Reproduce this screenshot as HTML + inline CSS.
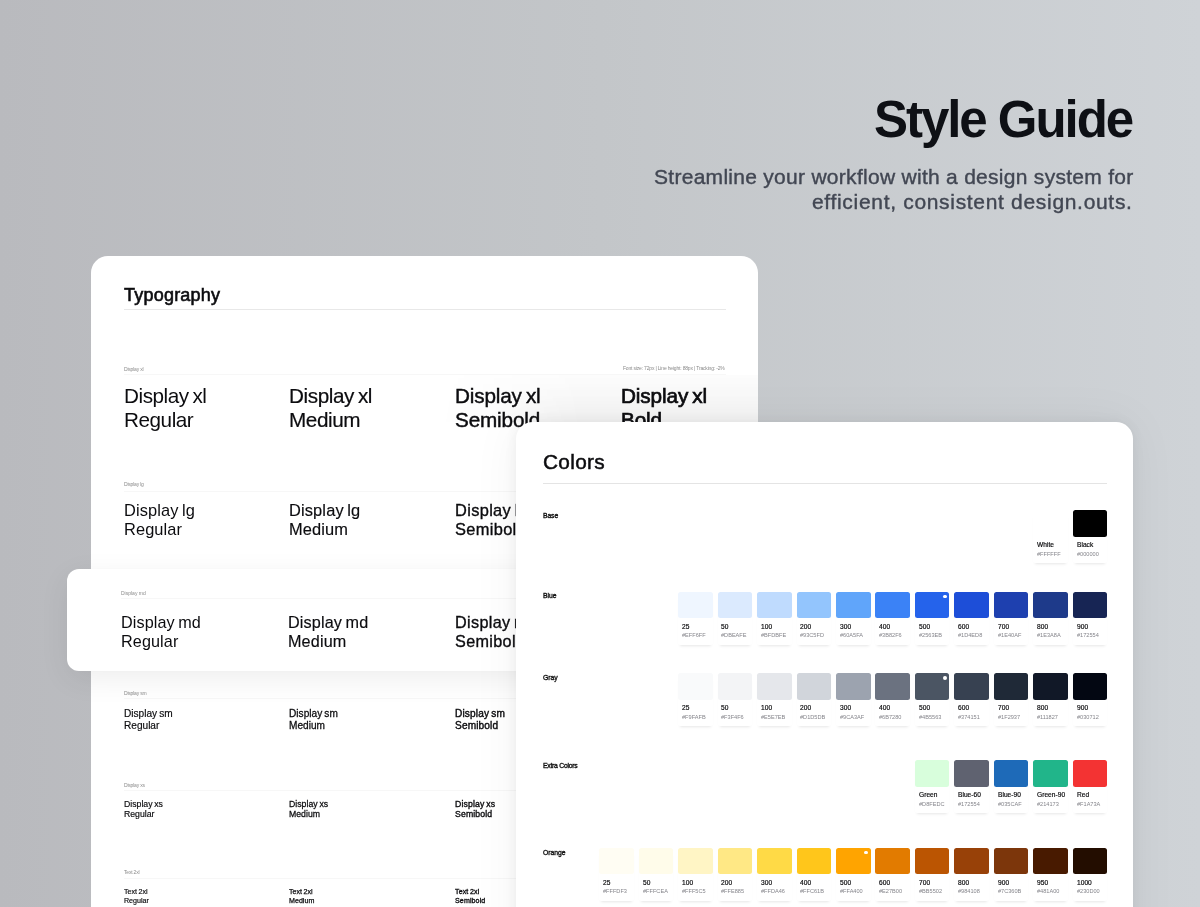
<!DOCTYPE html>
<html><head><meta charset="utf-8"><title>Style Guide</title>
<style>
html,body{margin:0;padding:0;width:1200px;height:907px;overflow:hidden;background:#c3c6c9;}
#root{position:relative;width:1200px;height:907px;overflow:hidden;background:linear-gradient(90deg,#b9babe 0%,#c3c6c9 50%,#cfd3d7 100%);font-family:"Liberation Sans",sans-serif;}
.t{position:absolute;white-space:nowrap;will-change:transform;}
.card{position:absolute;background:#fff;border-radius:17px;overflow:hidden;}
#typo{left:90.5px;top:256px;width:667.5px;height:700px;}
#colors{left:516px;top:422px;width:616.9px;height:600px;box-shadow:0 0 16px rgba(0,0,0,0.07),0 0 50px rgba(0,0,0,0.05);}
.card2{position:absolute;background:#fff;border-radius:12px;overflow:hidden;}
#hl{left:66.5px;top:568.5px;width:700px;height:102px;box-shadow:0 8px 30px rgba(0,0,0,0.07),0 0 4px rgba(0,0,0,0.02);}
.ln{position:absolute;height:1px;background:#f7f7f7;}
.ln2{position:absolute;height:1px;background:#e4e4e4;}
.sw{position:absolute;width:34.5px;height:26.5px;border-radius:2.5px;}
.sw i{position:absolute;right:2.9px;top:3.2px;width:3.8px;height:3.8px;border-radius:50%;background:#fff;}
.sc{position:absolute;width:34.5px;height:53px;background:#fff;box-shadow:0 3px 3px -2px rgba(0,0,0,0.10);border-radius:2.5px;}
</style></head><body><div id="root">
<div class="t" style="right:67.50px;top:93.93px;font-size:51.00px;line-height:51.00px;font-weight:700;color:#0e1015;letter-spacing:-2.04px;text-align:right;">Style Guide</div><div class="t" style="right:66.90px;top:165.92px;font-size:21.00px;line-height:21.00px;font-weight:400;color:#424753;letter-spacing:0.283px;text-align:right;-webkit-text-stroke:0.4px #424753;">Streamline your workflow with a design system for</div><div class="t" style="right:67.40px;top:191.42px;font-size:21.00px;line-height:21.00px;font-weight:400;color:#424753;letter-spacing:0.685px;text-align:right;-webkit-text-stroke:0.4px #424753;">efficient, consistent design.outs.</div><div id="typo" class="card"><div style="position:absolute;left:349.5px;top:118.5px;width:318px;height:47.5px;background:linear-gradient(to bottom,rgba(0,0,0,0.012),rgba(0,0,0,0.045));-webkit-mask-image:linear-gradient(to right,transparent,#000 45%)"></div><div class="t" style="left:33.00px;top:30.16px;font-size:18.00px;line-height:18.00px;font-weight:400;color:#0c0c0f;letter-spacing:0.22px;-webkit-text-stroke:0.6px #0c0c0f;">Typography</div><div class="ln" style="left:33.0px;top:53px;width:602px;background:#e8e8e8"></div><div class="t" style="left:33.00px;top:110.87px;font-size:5.00px;line-height:5.00px;font-weight:400;color:#8a8a8a;letter-spacing:-0.2px;">Display xl</div><div class="ln" style="left:33.0px;top:118px;width:602px"></div><div class="t" style="left:33.00px;top:129.98px;font-size:20.70px;line-height:20.70px;font-weight:400;color:#0c0c0f;letter-spacing:-0.45px;word-spacing:-1.50px;">Display xl</div><div class="t" style="left:33.00px;top:153.98px;font-size:20.70px;line-height:20.70px;font-weight:400;color:#0c0c0f;letter-spacing:-0.45px;word-spacing:-1.50px;">Regular</div><div class="t" style="left:198.50px;top:129.98px;font-size:20.70px;line-height:20.70px;font-weight:400;color:#0c0c0f;letter-spacing:-0.4px;word-spacing:-1.50px;-webkit-text-stroke:0.20px #0c0c0f;">Display xl</div><div class="t" style="left:198.50px;top:153.98px;font-size:20.70px;line-height:20.70px;font-weight:400;color:#0c0c0f;letter-spacing:-0.4px;word-spacing:-1.50px;-webkit-text-stroke:0.20px #0c0c0f;">Medium</div><div class="t" style="left:364.50px;top:129.98px;font-size:20.70px;line-height:20.70px;font-weight:400;color:#0c0c0f;letter-spacing:-0.15px;word-spacing:-1.50px;-webkit-text-stroke:0.45px #0c0c0f;">Display xl</div><div class="t" style="left:364.50px;top:153.98px;font-size:20.70px;line-height:20.70px;font-weight:400;color:#0c0c0f;letter-spacing:-0.15px;word-spacing:-1.50px;-webkit-text-stroke:0.45px #0c0c0f;">Semibold</div><div class="t" style="left:530.00px;top:129.98px;font-size:20.70px;line-height:20.70px;font-weight:400;color:#0c0c0f;letter-spacing:-0.1px;word-spacing:-1.50px;-webkit-text-stroke:0.70px #0c0c0f;">Display xl</div><div class="t" style="left:530.00px;top:153.98px;font-size:20.70px;line-height:20.70px;font-weight:400;color:#0c0c0f;letter-spacing:-0.1px;word-spacing:-1.50px;-webkit-text-stroke:0.70px #0c0c0f;">Bold</div><div class="t" style="left:33.00px;top:226.37px;font-size:5.00px;line-height:5.00px;font-weight:400;color:#8a8a8a;letter-spacing:-0.2px;">Display lg</div><div class="ln" style="left:33.0px;top:235px;width:602px"></div><div class="t" style="left:33.00px;top:245.92px;font-size:16.40px;line-height:16.40px;font-weight:400;color:#0c0c0f;letter-spacing:0.1px;word-spacing:-1.19px;">Display lg</div><div class="t" style="left:33.00px;top:265.42px;font-size:16.40px;line-height:16.40px;font-weight:400;color:#0c0c0f;letter-spacing:0.1px;word-spacing:-1.19px;">Regular</div><div class="t" style="left:198.50px;top:245.92px;font-size:16.40px;line-height:16.40px;font-weight:400;color:#0c0c0f;letter-spacing:0.14px;word-spacing:-1.19px;-webkit-text-stroke:0.16px #0c0c0f;">Display lg</div><div class="t" style="left:198.50px;top:265.42px;font-size:16.40px;line-height:16.40px;font-weight:400;color:#0c0c0f;letter-spacing:0.14px;word-spacing:-1.19px;-webkit-text-stroke:0.16px #0c0c0f;">Medium</div><div class="t" style="left:364.50px;top:245.92px;font-size:16.40px;line-height:16.40px;font-weight:400;color:#0c0c0f;letter-spacing:0.338px;word-spacing:-1.19px;-webkit-text-stroke:0.36px #0c0c0f;">Display lg</div><div class="t" style="left:364.50px;top:265.42px;font-size:16.40px;line-height:16.40px;font-weight:400;color:#0c0c0f;letter-spacing:0.338px;word-spacing:-1.19px;-webkit-text-stroke:0.36px #0c0c0f;">Semibold</div><div class="t" style="left:530.00px;top:245.92px;font-size:16.40px;line-height:16.40px;font-weight:400;color:#0c0c0f;letter-spacing:0.377px;word-spacing:-1.19px;-webkit-text-stroke:0.55px #0c0c0f;">Display lg</div><div class="t" style="left:530.00px;top:265.42px;font-size:16.40px;line-height:16.40px;font-weight:400;color:#0c0c0f;letter-spacing:0.377px;word-spacing:-1.19px;-webkit-text-stroke:0.55px #0c0c0f;">Bold</div><div class="t" style="left:33.00px;top:434.67px;font-size:5.00px;line-height:5.00px;font-weight:400;color:#8a8a8a;letter-spacing:-0.2px;">Display sm</div><div class="ln" style="left:33.0px;top:442px;width:602px"></div><div class="t" style="left:33.00px;top:453.25px;font-size:10.10px;line-height:10.10px;font-weight:400;color:#0c0c0f;letter-spacing:0.0px;word-spacing:-0.73px;-webkit-text-stroke:0.18px #0c0c0f;">Display sm</div><div class="t" style="left:33.00px;top:465.25px;font-size:10.10px;line-height:10.10px;font-weight:400;color:#0c0c0f;letter-spacing:0.0px;word-spacing:-0.73px;-webkit-text-stroke:0.18px #0c0c0f;">Regular</div><div class="t" style="left:198.50px;top:453.25px;font-size:10.10px;line-height:10.10px;font-weight:400;color:#0c0c0f;letter-spacing:0.024px;word-spacing:-0.73px;-webkit-text-stroke:0.28px #0c0c0f;">Display sm</div><div class="t" style="left:198.50px;top:465.25px;font-size:10.10px;line-height:10.10px;font-weight:400;color:#0c0c0f;letter-spacing:0.024px;word-spacing:-0.73px;-webkit-text-stroke:0.28px #0c0c0f;">Medium</div><div class="t" style="left:364.50px;top:453.25px;font-size:10.10px;line-height:10.10px;font-weight:400;color:#0c0c0f;letter-spacing:0.146px;word-spacing:-0.73px;-webkit-text-stroke:0.40px #0c0c0f;">Display sm</div><div class="t" style="left:364.50px;top:465.25px;font-size:10.10px;line-height:10.10px;font-weight:400;color:#0c0c0f;letter-spacing:0.146px;word-spacing:-0.73px;-webkit-text-stroke:0.40px #0c0c0f;">Semibold</div><div class="t" style="left:33.00px;top:526.57px;font-size:5.00px;line-height:5.00px;font-weight:400;color:#8a8a8a;letter-spacing:-0.2px;">Display xs</div><div class="ln" style="left:33.0px;top:533.5px;width:602px"></div><div class="t" style="left:33.00px;top:544.14px;font-size:8.70px;line-height:8.70px;font-weight:400;color:#0c0c0f;letter-spacing:0.0px;word-spacing:-0.63px;-webkit-text-stroke:0.18px #0c0c0f;">Display xs</div><div class="t" style="left:33.00px;top:553.94px;font-size:8.70px;line-height:8.70px;font-weight:400;color:#0c0c0f;letter-spacing:0.0px;word-spacing:-0.63px;-webkit-text-stroke:0.18px #0c0c0f;">Regular</div><div class="t" style="left:198.50px;top:544.14px;font-size:8.70px;line-height:8.70px;font-weight:400;color:#0c0c0f;letter-spacing:0.021px;word-spacing:-0.63px;-webkit-text-stroke:0.26px #0c0c0f;">Display xs</div><div class="t" style="left:198.50px;top:553.94px;font-size:8.70px;line-height:8.70px;font-weight:400;color:#0c0c0f;letter-spacing:0.021px;word-spacing:-0.63px;-webkit-text-stroke:0.26px #0c0c0f;">Medium</div><div class="t" style="left:364.50px;top:544.14px;font-size:8.70px;line-height:8.70px;font-weight:400;color:#0c0c0f;letter-spacing:0.126px;word-spacing:-0.63px;-webkit-text-stroke:0.37px #0c0c0f;">Display xs</div><div class="t" style="left:364.50px;top:553.94px;font-size:8.70px;line-height:8.70px;font-weight:400;color:#0c0c0f;letter-spacing:0.126px;word-spacing:-0.63px;-webkit-text-stroke:0.37px #0c0c0f;">Semibold</div><div class="t" style="left:33.00px;top:613.87px;font-size:5.00px;line-height:5.00px;font-weight:400;color:#8a8a8a;letter-spacing:-0.2px;">Text 2xl</div><div class="ln" style="left:33.0px;top:621.8px;width:602px"></div><div class="t" style="left:33.00px;top:632.79px;font-size:7.10px;line-height:7.10px;font-weight:400;color:#0c0c0f;letter-spacing:0.0px;word-spacing:-0.51px;-webkit-text-stroke:0.18px #0c0c0f;">Text 2xl</div><div class="t" style="left:33.00px;top:642.09px;font-size:7.10px;line-height:7.10px;font-weight:400;color:#0c0c0f;letter-spacing:0.0px;word-spacing:-0.51px;-webkit-text-stroke:0.18px #0c0c0f;">Regular</div><div class="t" style="left:198.50px;top:632.79px;font-size:7.10px;line-height:7.10px;font-weight:400;color:#0c0c0f;letter-spacing:0.017px;word-spacing:-0.51px;-webkit-text-stroke:0.25px #0c0c0f;">Text 2xl</div><div class="t" style="left:198.50px;top:642.09px;font-size:7.10px;line-height:7.10px;font-weight:400;color:#0c0c0f;letter-spacing:0.017px;word-spacing:-0.51px;-webkit-text-stroke:0.25px #0c0c0f;">Medium</div><div class="t" style="left:364.50px;top:632.79px;font-size:7.10px;line-height:7.10px;font-weight:400;color:#0c0c0f;letter-spacing:0.103px;word-spacing:-0.51px;-webkit-text-stroke:0.33px #0c0c0f;">Text 2xl</div><div class="t" style="left:364.50px;top:642.09px;font-size:7.10px;line-height:7.10px;font-weight:400;color:#0c0c0f;letter-spacing:0.103px;word-spacing:-0.51px;-webkit-text-stroke:0.33px #0c0c0f;">Semibold</div><div class="t" style="right:33.50px;top:110.37px;font-size:5.00px;line-height:5.00px;font-weight:400;color:#8a8a8a;letter-spacing:-0.18px;text-align:right;">Font size: 72px | Line height: 88px | Tracking: -2%</div></div><div id="hl" class="card2"><div class="t" style="left:54.00px;top:22.17px;font-size:5.00px;line-height:5.00px;font-weight:400;color:#8a8a8a;letter-spacing:0px;">Display md</div><div class="ln" style="left:54.0px;top:29.899999999999977px;width:620px"></div><div class="t" style="left:54.00px;top:45.79px;font-size:16.20px;line-height:16.20px;font-weight:400;color:#0c0c0f;letter-spacing:0.1px;word-spacing:-1.17px;">Display md</div><div class="t" style="left:54.00px;top:64.49px;font-size:16.20px;line-height:16.20px;font-weight:400;color:#0c0c0f;letter-spacing:0.1px;word-spacing:-1.17px;">Regular</div><div class="t" style="left:221.30px;top:45.79px;font-size:16.20px;line-height:16.20px;font-weight:400;color:#0c0c0f;letter-spacing:0.139px;word-spacing:-1.17px;-webkit-text-stroke:0.16px #0c0c0f;">Display md</div><div class="t" style="left:221.30px;top:64.49px;font-size:16.20px;line-height:16.20px;font-weight:400;color:#0c0c0f;letter-spacing:0.139px;word-spacing:-1.17px;-webkit-text-stroke:0.16px #0c0c0f;">Medium</div><div class="t" style="left:388.80px;top:45.79px;font-size:16.20px;line-height:16.20px;font-weight:400;color:#0c0c0f;letter-spacing:0.335px;word-spacing:-1.17px;-webkit-text-stroke:0.35px #0c0c0f;">Display md</div><div class="t" style="left:388.80px;top:64.49px;font-size:16.20px;line-height:16.20px;font-weight:400;color:#0c0c0f;letter-spacing:0.335px;word-spacing:-1.17px;-webkit-text-stroke:0.35px #0c0c0f;">Semibold</div><div class="t" style="left:556.30px;top:45.79px;font-size:16.20px;line-height:16.20px;font-weight:400;color:#0c0c0f;letter-spacing:0.374px;word-spacing:-1.17px;-webkit-text-stroke:0.55px #0c0c0f;">Display md</div><div class="t" style="left:556.30px;top:64.49px;font-size:16.20px;line-height:16.20px;font-weight:400;color:#0c0c0f;letter-spacing:0.374px;word-spacing:-1.17px;-webkit-text-stroke:0.55px #0c0c0f;">Bold</div></div><div id="colors" class="card"><div class="t" style="left:27.00px;top:30.19px;font-size:20.80px;line-height:20.80px;font-weight:400;color:#0c0c0f;letter-spacing:0.32px;-webkit-text-stroke:0.5px #0c0c0f;">Colors</div><div class="ln2" style="left:27px;top:61px;width:564px"></div><div class="t" style="left:27.00px;top:90.64px;font-size:6.80px;line-height:6.80px;font-weight:400;color:#111;letter-spacing:-0.09999999999999998px;-webkit-text-stroke:0.35px #111;">Base</div><div class="sc" style="left:517.25px;top:88.00px"></div><div class="sw" style="left:517.25px;top:88.00px;background:#ffffff"></div><div class="t" style="left:521.05px;top:120.11px;font-size:6.60px;line-height:6.60px;font-weight:400;color:#0a0a0c;letter-spacing:0.03px;-webkit-text-stroke:0.18px #0a0a0c;">White</div><div class="t" style="left:521.05px;top:129.86px;font-size:5.60px;line-height:5.60px;font-weight:400;color:#85858b;letter-spacing:0px;">#FFFFFF</div><div class="sc" style="left:556.70px;top:88.00px"></div><div class="sw" style="left:556.70px;top:88.00px;background:#000000"></div><div class="t" style="left:560.50px;top:120.11px;font-size:6.60px;line-height:6.60px;font-weight:400;color:#0a0a0c;letter-spacing:0.03px;-webkit-text-stroke:0.18px #0a0a0c;">Black</div><div class="t" style="left:560.50px;top:129.86px;font-size:5.60px;line-height:5.60px;font-weight:400;color:#85858b;letter-spacing:0px;">#000000</div><div class="t" style="left:27.00px;top:171.34px;font-size:6.80px;line-height:6.80px;font-weight:400;color:#111;letter-spacing:0.0px;-webkit-text-stroke:0.35px #111;">Blue</div><div class="sc" style="left:162.20px;top:169.50px"></div><div class="sw" style="left:162.20px;top:169.50px;background:#EFF6FF"></div><div class="t" style="left:166.00px;top:201.61px;font-size:6.60px;line-height:6.60px;font-weight:400;color:#0a0a0c;letter-spacing:0.03px;-webkit-text-stroke:0.18px #0a0a0c;">25</div><div class="t" style="left:166.00px;top:211.36px;font-size:5.60px;line-height:5.60px;font-weight:400;color:#85858b;letter-spacing:0px;">#EFF6FF</div><div class="sc" style="left:201.65px;top:169.50px"></div><div class="sw" style="left:201.65px;top:169.50px;background:#DBEAFE"></div><div class="t" style="left:205.45px;top:201.61px;font-size:6.60px;line-height:6.60px;font-weight:400;color:#0a0a0c;letter-spacing:0.03px;-webkit-text-stroke:0.18px #0a0a0c;">50</div><div class="t" style="left:205.45px;top:211.36px;font-size:5.60px;line-height:5.60px;font-weight:400;color:#85858b;letter-spacing:0px;">#DBEAFE</div><div class="sc" style="left:241.10px;top:169.50px"></div><div class="sw" style="left:241.10px;top:169.50px;background:#BFDBFE"></div><div class="t" style="left:244.90px;top:201.61px;font-size:6.60px;line-height:6.60px;font-weight:400;color:#0a0a0c;letter-spacing:0.03px;-webkit-text-stroke:0.18px #0a0a0c;">100</div><div class="t" style="left:244.90px;top:211.36px;font-size:5.60px;line-height:5.60px;font-weight:400;color:#85858b;letter-spacing:0px;">#BFDBFE</div><div class="sc" style="left:280.55px;top:169.50px"></div><div class="sw" style="left:280.55px;top:169.50px;background:#93C5FD"></div><div class="t" style="left:284.35px;top:201.61px;font-size:6.60px;line-height:6.60px;font-weight:400;color:#0a0a0c;letter-spacing:0.03px;-webkit-text-stroke:0.18px #0a0a0c;">200</div><div class="t" style="left:284.35px;top:211.36px;font-size:5.60px;line-height:5.60px;font-weight:400;color:#85858b;letter-spacing:0px;">#93C5FD</div><div class="sc" style="left:320.00px;top:169.50px"></div><div class="sw" style="left:320.00px;top:169.50px;background:#60A5FA"></div><div class="t" style="left:323.80px;top:201.61px;font-size:6.60px;line-height:6.60px;font-weight:400;color:#0a0a0c;letter-spacing:0.03px;-webkit-text-stroke:0.18px #0a0a0c;">300</div><div class="t" style="left:323.80px;top:211.36px;font-size:5.60px;line-height:5.60px;font-weight:400;color:#85858b;letter-spacing:0px;">#60A5FA</div><div class="sc" style="left:359.45px;top:169.50px"></div><div class="sw" style="left:359.45px;top:169.50px;background:#3B82F6"></div><div class="t" style="left:363.25px;top:201.61px;font-size:6.60px;line-height:6.60px;font-weight:400;color:#0a0a0c;letter-spacing:0.03px;-webkit-text-stroke:0.18px #0a0a0c;">400</div><div class="t" style="left:363.25px;top:211.36px;font-size:5.60px;line-height:5.60px;font-weight:400;color:#85858b;letter-spacing:0px;">#3B82F6</div><div class="sc" style="left:398.90px;top:169.50px"></div><div class="sw" style="left:398.90px;top:169.50px;background:#2563EB"><i></i></div><div class="t" style="left:402.70px;top:201.61px;font-size:6.60px;line-height:6.60px;font-weight:400;color:#0a0a0c;letter-spacing:0.03px;-webkit-text-stroke:0.18px #0a0a0c;">500</div><div class="t" style="left:402.70px;top:211.36px;font-size:5.60px;line-height:5.60px;font-weight:400;color:#85858b;letter-spacing:0px;">#2563EB</div><div class="sc" style="left:438.35px;top:169.50px"></div><div class="sw" style="left:438.35px;top:169.50px;background:#1D4ED8"></div><div class="t" style="left:442.15px;top:201.61px;font-size:6.60px;line-height:6.60px;font-weight:400;color:#0a0a0c;letter-spacing:0.03px;-webkit-text-stroke:0.18px #0a0a0c;">600</div><div class="t" style="left:442.15px;top:211.36px;font-size:5.60px;line-height:5.60px;font-weight:400;color:#85858b;letter-spacing:0px;">#1D4ED8</div><div class="sc" style="left:477.80px;top:169.50px"></div><div class="sw" style="left:477.80px;top:169.50px;background:#1E40AF"></div><div class="t" style="left:481.60px;top:201.61px;font-size:6.60px;line-height:6.60px;font-weight:400;color:#0a0a0c;letter-spacing:0.03px;-webkit-text-stroke:0.18px #0a0a0c;">700</div><div class="t" style="left:481.60px;top:211.36px;font-size:5.60px;line-height:5.60px;font-weight:400;color:#85858b;letter-spacing:0px;">#1E40AF</div><div class="sc" style="left:517.25px;top:169.50px"></div><div class="sw" style="left:517.25px;top:169.50px;background:#1E3A8A"></div><div class="t" style="left:521.05px;top:201.61px;font-size:6.60px;line-height:6.60px;font-weight:400;color:#0a0a0c;letter-spacing:0.03px;-webkit-text-stroke:0.18px #0a0a0c;">800</div><div class="t" style="left:521.05px;top:211.36px;font-size:5.60px;line-height:5.60px;font-weight:400;color:#85858b;letter-spacing:0px;">#1E3A8A</div><div class="sc" style="left:556.70px;top:169.50px"></div><div class="sw" style="left:556.70px;top:169.50px;background:#172554"></div><div class="t" style="left:560.50px;top:201.61px;font-size:6.60px;line-height:6.60px;font-weight:400;color:#0a0a0c;letter-spacing:0.03px;-webkit-text-stroke:0.18px #0a0a0c;">900</div><div class="t" style="left:560.50px;top:211.36px;font-size:5.60px;line-height:5.60px;font-weight:400;color:#85858b;letter-spacing:0px;">#172554</div><div class="t" style="left:27.00px;top:253.04px;font-size:6.80px;line-height:6.80px;font-weight:400;color:#111;letter-spacing:0.0px;-webkit-text-stroke:0.35px #111;">Gray</div><div class="sc" style="left:162.20px;top:251.20px"></div><div class="sw" style="left:162.20px;top:251.20px;background:#F9FAFB"></div><div class="t" style="left:166.00px;top:283.31px;font-size:6.60px;line-height:6.60px;font-weight:400;color:#0a0a0c;letter-spacing:0.03px;-webkit-text-stroke:0.18px #0a0a0c;">25</div><div class="t" style="left:166.00px;top:293.06px;font-size:5.60px;line-height:5.60px;font-weight:400;color:#85858b;letter-spacing:0px;">#F9FAFB</div><div class="sc" style="left:201.65px;top:251.20px"></div><div class="sw" style="left:201.65px;top:251.20px;background:#F3F4F6"></div><div class="t" style="left:205.45px;top:283.31px;font-size:6.60px;line-height:6.60px;font-weight:400;color:#0a0a0c;letter-spacing:0.03px;-webkit-text-stroke:0.18px #0a0a0c;">50</div><div class="t" style="left:205.45px;top:293.06px;font-size:5.60px;line-height:5.60px;font-weight:400;color:#85858b;letter-spacing:0px;">#F3F4F6</div><div class="sc" style="left:241.10px;top:251.20px"></div><div class="sw" style="left:241.10px;top:251.20px;background:#E5E7EB"></div><div class="t" style="left:244.90px;top:283.31px;font-size:6.60px;line-height:6.60px;font-weight:400;color:#0a0a0c;letter-spacing:0.03px;-webkit-text-stroke:0.18px #0a0a0c;">100</div><div class="t" style="left:244.90px;top:293.06px;font-size:5.60px;line-height:5.60px;font-weight:400;color:#85858b;letter-spacing:0px;">#E5E7EB</div><div class="sc" style="left:280.55px;top:251.20px"></div><div class="sw" style="left:280.55px;top:251.20px;background:#D1D5DB"></div><div class="t" style="left:284.35px;top:283.31px;font-size:6.60px;line-height:6.60px;font-weight:400;color:#0a0a0c;letter-spacing:0.03px;-webkit-text-stroke:0.18px #0a0a0c;">200</div><div class="t" style="left:284.35px;top:293.06px;font-size:5.60px;line-height:5.60px;font-weight:400;color:#85858b;letter-spacing:0px;">#D1D5DB</div><div class="sc" style="left:320.00px;top:251.20px"></div><div class="sw" style="left:320.00px;top:251.20px;background:#9CA3AF"></div><div class="t" style="left:323.80px;top:283.31px;font-size:6.60px;line-height:6.60px;font-weight:400;color:#0a0a0c;letter-spacing:0.03px;-webkit-text-stroke:0.18px #0a0a0c;">300</div><div class="t" style="left:323.80px;top:293.06px;font-size:5.60px;line-height:5.60px;font-weight:400;color:#85858b;letter-spacing:0px;">#9CA3AF</div><div class="sc" style="left:359.45px;top:251.20px"></div><div class="sw" style="left:359.45px;top:251.20px;background:#6B7280"></div><div class="t" style="left:363.25px;top:283.31px;font-size:6.60px;line-height:6.60px;font-weight:400;color:#0a0a0c;letter-spacing:0.03px;-webkit-text-stroke:0.18px #0a0a0c;">400</div><div class="t" style="left:363.25px;top:293.06px;font-size:5.60px;line-height:5.60px;font-weight:400;color:#85858b;letter-spacing:0px;">#6B7280</div><div class="sc" style="left:398.90px;top:251.20px"></div><div class="sw" style="left:398.90px;top:251.20px;background:#4B5563"><i></i></div><div class="t" style="left:402.70px;top:283.31px;font-size:6.60px;line-height:6.60px;font-weight:400;color:#0a0a0c;letter-spacing:0.03px;-webkit-text-stroke:0.18px #0a0a0c;">500</div><div class="t" style="left:402.70px;top:293.06px;font-size:5.60px;line-height:5.60px;font-weight:400;color:#85858b;letter-spacing:0px;">#4B5563</div><div class="sc" style="left:438.35px;top:251.20px"></div><div class="sw" style="left:438.35px;top:251.20px;background:#374151"></div><div class="t" style="left:442.15px;top:283.31px;font-size:6.60px;line-height:6.60px;font-weight:400;color:#0a0a0c;letter-spacing:0.03px;-webkit-text-stroke:0.18px #0a0a0c;">600</div><div class="t" style="left:442.15px;top:293.06px;font-size:5.60px;line-height:5.60px;font-weight:400;color:#85858b;letter-spacing:0px;">#374151</div><div class="sc" style="left:477.80px;top:251.20px"></div><div class="sw" style="left:477.80px;top:251.20px;background:#1F2937"></div><div class="t" style="left:481.60px;top:283.31px;font-size:6.60px;line-height:6.60px;font-weight:400;color:#0a0a0c;letter-spacing:0.03px;-webkit-text-stroke:0.18px #0a0a0c;">700</div><div class="t" style="left:481.60px;top:293.06px;font-size:5.60px;line-height:5.60px;font-weight:400;color:#85858b;letter-spacing:0px;">#1F2937</div><div class="sc" style="left:517.25px;top:251.20px"></div><div class="sw" style="left:517.25px;top:251.20px;background:#111827"></div><div class="t" style="left:521.05px;top:283.31px;font-size:6.60px;line-height:6.60px;font-weight:400;color:#0a0a0c;letter-spacing:0.03px;-webkit-text-stroke:0.18px #0a0a0c;">800</div><div class="t" style="left:521.05px;top:293.06px;font-size:5.60px;line-height:5.60px;font-weight:400;color:#85858b;letter-spacing:0px;">#111827</div><div class="sc" style="left:556.70px;top:251.20px"></div><div class="sw" style="left:556.70px;top:251.20px;background:#030712"></div><div class="t" style="left:560.50px;top:283.31px;font-size:6.60px;line-height:6.60px;font-weight:400;color:#0a0a0c;letter-spacing:0.03px;-webkit-text-stroke:0.18px #0a0a0c;">900</div><div class="t" style="left:560.50px;top:293.06px;font-size:5.60px;line-height:5.60px;font-weight:400;color:#85858b;letter-spacing:0px;">#030712</div><div class="t" style="left:27.00px;top:340.54px;font-size:6.80px;line-height:6.80px;font-weight:400;color:#111;letter-spacing:-0.25px;-webkit-text-stroke:0.35px #111;">Extra Colors</div><div class="sc" style="left:398.90px;top:338.00px"></div><div class="sw" style="left:398.90px;top:338.00px;background:#D8FEDC"></div><div class="t" style="left:402.70px;top:370.11px;font-size:6.60px;line-height:6.60px;font-weight:400;color:#0a0a0c;letter-spacing:0.03px;-webkit-text-stroke:0.18px #0a0a0c;">Green</div><div class="t" style="left:402.70px;top:379.86px;font-size:5.60px;line-height:5.60px;font-weight:400;color:#85858b;letter-spacing:0px;">#D8FEDC</div><div class="sc" style="left:438.35px;top:338.00px"></div><div class="sw" style="left:438.35px;top:338.00px;background:#5F6270"></div><div class="t" style="left:442.15px;top:370.11px;font-size:6.60px;line-height:6.60px;font-weight:400;color:#0a0a0c;letter-spacing:0.03px;-webkit-text-stroke:0.18px #0a0a0c;">Blue-60</div><div class="t" style="left:442.15px;top:379.86px;font-size:5.60px;line-height:5.60px;font-weight:400;color:#85858b;letter-spacing:0px;">#172554</div><div class="sc" style="left:477.80px;top:338.00px"></div><div class="sw" style="left:477.80px;top:338.00px;background:#1E6AB8"></div><div class="t" style="left:481.60px;top:370.11px;font-size:6.60px;line-height:6.60px;font-weight:400;color:#0a0a0c;letter-spacing:0.03px;-webkit-text-stroke:0.18px #0a0a0c;">Blue-90</div><div class="t" style="left:481.60px;top:379.86px;font-size:5.60px;line-height:5.60px;font-weight:400;color:#85858b;letter-spacing:0px;">#035CAF</div><div class="sc" style="left:517.25px;top:338.00px"></div><div class="sw" style="left:517.25px;top:338.00px;background:#21B58A"></div><div class="t" style="left:521.05px;top:370.11px;font-size:6.60px;line-height:6.60px;font-weight:400;color:#0a0a0c;letter-spacing:0.03px;-webkit-text-stroke:0.18px #0a0a0c;">Green-90</div><div class="t" style="left:521.05px;top:379.86px;font-size:5.60px;line-height:5.60px;font-weight:400;color:#85858b;letter-spacing:0px;">#214173</div><div class="sc" style="left:556.70px;top:338.00px"></div><div class="sw" style="left:556.70px;top:338.00px;background:#F33333"></div><div class="t" style="left:560.50px;top:370.11px;font-size:6.60px;line-height:6.60px;font-weight:400;color:#0a0a0c;letter-spacing:0.03px;-webkit-text-stroke:0.18px #0a0a0c;">Red</div><div class="t" style="left:560.50px;top:379.86px;font-size:5.60px;line-height:5.60px;font-weight:400;color:#85858b;letter-spacing:0px;">#F1A73A</div><div class="t" style="left:27.00px;top:427.84px;font-size:6.80px;line-height:6.80px;font-weight:400;color:#111;letter-spacing:-0.03999999999999998px;-webkit-text-stroke:0.35px #111;">Orange</div><div class="sc" style="left:83.30px;top:425.50px"></div><div class="sw" style="left:83.30px;top:425.50px;background:#FFFDF3"></div><div class="t" style="left:87.10px;top:457.61px;font-size:6.60px;line-height:6.60px;font-weight:400;color:#0a0a0c;letter-spacing:0.03px;-webkit-text-stroke:0.18px #0a0a0c;">25</div><div class="t" style="left:87.10px;top:467.36px;font-size:5.60px;line-height:5.60px;font-weight:400;color:#85858b;letter-spacing:0px;">#FFFDF3</div><div class="sc" style="left:122.75px;top:425.50px"></div><div class="sw" style="left:122.75px;top:425.50px;background:#FFFCEA"></div><div class="t" style="left:126.55px;top:457.61px;font-size:6.60px;line-height:6.60px;font-weight:400;color:#0a0a0c;letter-spacing:0.03px;-webkit-text-stroke:0.18px #0a0a0c;">50</div><div class="t" style="left:126.55px;top:467.36px;font-size:5.60px;line-height:5.60px;font-weight:400;color:#85858b;letter-spacing:0px;">#FFFCEA</div><div class="sc" style="left:162.20px;top:425.50px"></div><div class="sw" style="left:162.20px;top:425.50px;background:#FFF5C5"></div><div class="t" style="left:166.00px;top:457.61px;font-size:6.60px;line-height:6.60px;font-weight:400;color:#0a0a0c;letter-spacing:0.03px;-webkit-text-stroke:0.18px #0a0a0c;">100</div><div class="t" style="left:166.00px;top:467.36px;font-size:5.60px;line-height:5.60px;font-weight:400;color:#85858b;letter-spacing:0px;">#FFF5C5</div><div class="sc" style="left:201.65px;top:425.50px"></div><div class="sw" style="left:201.65px;top:425.50px;background:#FFE885"></div><div class="t" style="left:205.45px;top:457.61px;font-size:6.60px;line-height:6.60px;font-weight:400;color:#0a0a0c;letter-spacing:0.03px;-webkit-text-stroke:0.18px #0a0a0c;">200</div><div class="t" style="left:205.45px;top:467.36px;font-size:5.60px;line-height:5.60px;font-weight:400;color:#85858b;letter-spacing:0px;">#FFE885</div><div class="sc" style="left:241.10px;top:425.50px"></div><div class="sw" style="left:241.10px;top:425.50px;background:#FFDA46"></div><div class="t" style="left:244.90px;top:457.61px;font-size:6.60px;line-height:6.60px;font-weight:400;color:#0a0a0c;letter-spacing:0.03px;-webkit-text-stroke:0.18px #0a0a0c;">300</div><div class="t" style="left:244.90px;top:467.36px;font-size:5.60px;line-height:5.60px;font-weight:400;color:#85858b;letter-spacing:0px;">#FFDA46</div><div class="sc" style="left:280.55px;top:425.50px"></div><div class="sw" style="left:280.55px;top:425.50px;background:#FFC61B"></div><div class="t" style="left:284.35px;top:457.61px;font-size:6.60px;line-height:6.60px;font-weight:400;color:#0a0a0c;letter-spacing:0.03px;-webkit-text-stroke:0.18px #0a0a0c;">400</div><div class="t" style="left:284.35px;top:467.36px;font-size:5.60px;line-height:5.60px;font-weight:400;color:#85858b;letter-spacing:0px;">#FFC61B</div><div class="sc" style="left:320.00px;top:425.50px"></div><div class="sw" style="left:320.00px;top:425.50px;background:#FFA400"><i></i></div><div class="t" style="left:323.80px;top:457.61px;font-size:6.60px;line-height:6.60px;font-weight:400;color:#0a0a0c;letter-spacing:0.03px;-webkit-text-stroke:0.18px #0a0a0c;">500</div><div class="t" style="left:323.80px;top:467.36px;font-size:5.60px;line-height:5.60px;font-weight:400;color:#85858b;letter-spacing:0px;">#FFA400</div><div class="sc" style="left:359.45px;top:425.50px"></div><div class="sw" style="left:359.45px;top:425.50px;background:#E27B00"></div><div class="t" style="left:363.25px;top:457.61px;font-size:6.60px;line-height:6.60px;font-weight:400;color:#0a0a0c;letter-spacing:0.03px;-webkit-text-stroke:0.18px #0a0a0c;">600</div><div class="t" style="left:363.25px;top:467.36px;font-size:5.60px;line-height:5.60px;font-weight:400;color:#85858b;letter-spacing:0px;">#E27B00</div><div class="sc" style="left:398.90px;top:425.50px"></div><div class="sw" style="left:398.90px;top:425.50px;background:#BB5502"></div><div class="t" style="left:402.70px;top:457.61px;font-size:6.60px;line-height:6.60px;font-weight:400;color:#0a0a0c;letter-spacing:0.03px;-webkit-text-stroke:0.18px #0a0a0c;">700</div><div class="t" style="left:402.70px;top:467.36px;font-size:5.60px;line-height:5.60px;font-weight:400;color:#85858b;letter-spacing:0px;">#BB5502</div><div class="sc" style="left:438.35px;top:425.50px"></div><div class="sw" style="left:438.35px;top:425.50px;background:#984108"></div><div class="t" style="left:442.15px;top:457.61px;font-size:6.60px;line-height:6.60px;font-weight:400;color:#0a0a0c;letter-spacing:0.03px;-webkit-text-stroke:0.18px #0a0a0c;">800</div><div class="t" style="left:442.15px;top:467.36px;font-size:5.60px;line-height:5.60px;font-weight:400;color:#85858b;letter-spacing:0px;">#984108</div><div class="sc" style="left:477.80px;top:425.50px"></div><div class="sw" style="left:477.80px;top:425.50px;background:#7C360B"></div><div class="t" style="left:481.60px;top:457.61px;font-size:6.60px;line-height:6.60px;font-weight:400;color:#0a0a0c;letter-spacing:0.03px;-webkit-text-stroke:0.18px #0a0a0c;">900</div><div class="t" style="left:481.60px;top:467.36px;font-size:5.60px;line-height:5.60px;font-weight:400;color:#85858b;letter-spacing:0px;">#7C360B</div><div class="sc" style="left:517.25px;top:425.50px"></div><div class="sw" style="left:517.25px;top:425.50px;background:#481A00"></div><div class="t" style="left:521.05px;top:457.61px;font-size:6.60px;line-height:6.60px;font-weight:400;color:#0a0a0c;letter-spacing:0.03px;-webkit-text-stroke:0.18px #0a0a0c;">950</div><div class="t" style="left:521.05px;top:467.36px;font-size:5.60px;line-height:5.60px;font-weight:400;color:#85858b;letter-spacing:0px;">#481A00</div><div class="sc" style="left:556.70px;top:425.50px"></div><div class="sw" style="left:556.70px;top:425.50px;background:#230D00"></div><div class="t" style="left:560.50px;top:457.61px;font-size:6.60px;line-height:6.60px;font-weight:400;color:#0a0a0c;letter-spacing:0.03px;-webkit-text-stroke:0.18px #0a0a0c;">1000</div><div class="t" style="left:560.50px;top:467.36px;font-size:5.60px;line-height:5.60px;font-weight:400;color:#85858b;letter-spacing:0px;">#230D00</div></div>
</div></body></html>
